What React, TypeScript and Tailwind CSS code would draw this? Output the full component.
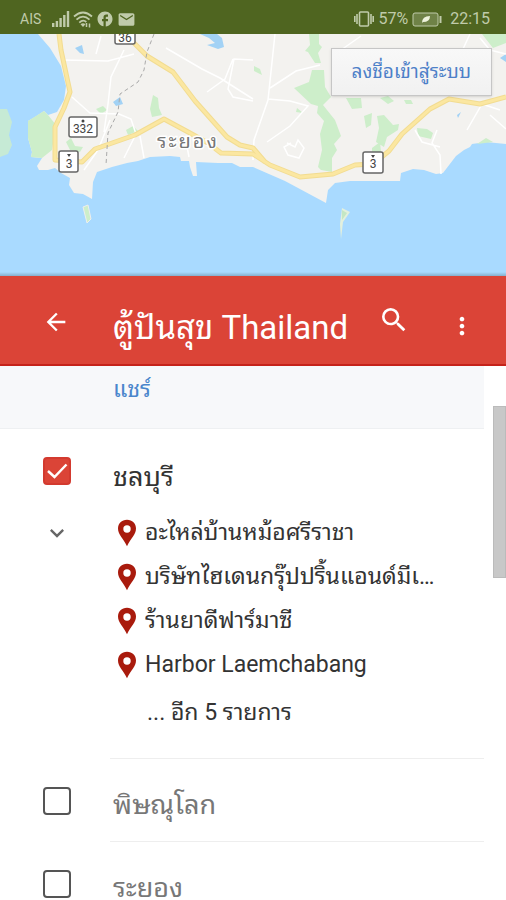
import { useState } from "react";
import { MdArrowBack, MdMoreVert, MdSearch, MdExpandMore, MdEmail, MdFacebook } from "react-icons/md";

const places = ["อะไหล่บ้านหม้อศรีราชา", "บริษัทไฮเดนกรุ๊ปปริ้นแอนด์มีเดีย จำกัด", "ร้านยาดีฟาร์มาซี", "Harbor Laemchabang"];

const StatusBar = () => (
  <div className="flex h-[34px] shrink-0 items-center justify-between bg-[#4f6520] px-4 pl-5 pt-1 text-[#c0cbaa]">
    <div className="flex items-center gap-[3px]">
      <span className="mr-2 text-sm">AIS</span>
      <svg viewBox="0 0 18 16" className="h-4 w-[18px]" fill="currentColor">
        <rect x="0" y="12" width="2.4" height="4" />
        <rect x="3.7" y="10" width="2.4" height="6" />
        <rect x="7.4" y="7" width="2.4" height="9" />
        <rect x="11.1" y="4" width="2.4" height="12" />
        <rect x="14.8" y="0" width="2.4" height="16" />
      </svg>
      <svg viewBox="0 0 20 17" className="h-[17px] w-5" fill="none" stroke="currentColor" strokeWidth="1.8">
        <path d="M1 5.5Q10-2.500 19 5.500M3.500 8.700Q10 2.500 16.500 8.700M6.300 11.600Q10 8 13.300 11" />
        <path d="M7.500 13.200L10 16l2.500-2.800Q10 11.300 7.500 13.200z" fill="currentColor" stroke="none" />
        <path d="M13.500 12v4M16.500 12.500v4" strokeWidth="1.500" />
      </svg>
      <MdFacebook className="size-[18px]" />
      <MdEmail className="size-[19px]" />
    </div>
    <div className="flex items-center gap-1">
      <svg viewBox="0 0 20 16" className="h-4 w-5" fill="none" stroke="currentColor" strokeWidth="1.600">
        <rect x="5.500" y="1" width="9" height="14" rx="1" />
        <path d="M3 3v10M17 3v10M.8 5v6M19.200 5v6" />
      </svg>
      <span className="text-base">57%</span>
      <svg viewBox="0 0 30 15" className="h-[15px] w-[30px]" fill="none" stroke="currentColor">
        <rect x="1" y="1" width="25" height="13" rx="2" fill="#6f8247" />
        <path d="M28.500 4v7" strokeWidth="2" />
        <path d="M10 11q0-7 8-7q0 6-7 6z" fill="#edf2dc" stroke="none" />
      </svg>
      <span className="ml-1 text-base">22:15</span>
    </div>
  </div>
);

const MapView = () => (
  <section className="relative h-[242px] shrink-0 overflow-hidden bg-[#a9daff]">
    <svg viewBox="0 34 506 242" preserveAspectRatio="xMidYMid slice" className="size-full" aria-label="ระยอง">
      <rect y="34" width="506" height="242" fill="#a9daff" />
      <path
        d="M38 34L50 48L61 66L66 86L64 100L57 112L48 115L44 111L35 117L28 121L28 138L32 152L31 157L42 158L37 166L39 170L48 170L55 168L61 173L70 178L69 185L74 193L83 194L92 199L93 182L97 172L112 167L127 163L138 161L150 157L170 156L180 157L181 161L189 161L190 167L193 176L197 176L196 162L218 163L232 163L240 167L253 167L285 181L326 203L328 190L335 183L350 181L400 181L401 173L413 169L424 170L436 174L443 173L456 156L464 150L470 147L472 144L486 142L506 144V34z"
        fill="#f3f2ef"
      />
      <g fill="#cdeeca">
        <path d="M48 115L44 111L28 121L28 138L32 152L31 157L42 158L52 150L56 125z" />
        <path d="M0 109h7l5 13L9 135L12 145L8 154L0 157z" opacity=".8" />
        <path d="M153 95l5 3l1 10l3 7l-10 2l-2-8zM126 130l7-4l5 5l-10 4zM96 109l7-3l4 4l-6 4zM66 142l5-4l4 8l8 1l-3 5l-10-2z" />
        <path d="M309 34h10v10l3 3l-4 6l3 10h-6l-7-11l-3-1l5-6zM294 88l15-6l3-12h12l1 17l6 10l-8 8l12 15l6 16l-7 8l3 6l-5 8v14l-11-2l-3-3l4-17l-2-16l4-13l-7-8l1-7l-7-2z" />
        <path d="M346 98h15l1 10l-10 1zM364 116l8-3l-1 12l-5 3zM377 116l7-1l9 10l6-1l-1 6l-11 7l-3 10l-8-5l3-14zM417 128l10 1l6 4l-2 6l-13-3zM380 98l8-2l6 5l-6 3zM482 34h24v9l-13 5zM372 148l8-6l1 10l-9 2z" />
        <path d="M254 66l6 3l2 6l-8-4zM297 108l6 5l-7-1zM404 100h7l2 4h-7zM477 144l9-6l7 4z" />
      </g>
      <g fill="#a2d2f5">
        <path d="M75 48l7-3l2 9l-4-1zM113 102l7-5l3 7l-7 2zM200 34h17l5 4l2 9l-6 2l-11-4l8-2l-6-5zM500 58l6-4v8zM457 115l4-3l-3 6z" />
      </g>
      <path d="M83 207l5-2l3 14l-4 4z" fill="#cdeeca" stroke="#eee" />
      <path d="M342 208l8 4l-7 10l-2 17l-1-15z" fill="#e3f0dd" />
      <path d="M342 210l5 3l-5 7z" fill="#c4e7c4" />
      <g fill="none" stroke="#fff" strokeWidth="1.500">
        <path d="M63 60l45 1l26-7M101 36l-5 18M124 50l-13 27l-3 27l-4 28M72 97l18 16l29 1l12 5l5 15l-12 24M166 48l36 21l18 9l33 21M233 59l-8 20l-18 13M253 60l-19-1l-6 30l5 8l20 4M110 120l-12 30l-14 20M140 136l4 22M185 136l4 21" />
        <path d="M275 34l-7 66l-14 40l-1 20M268 99l22 2l18 5l-18 20l-23 16M270 88l26-17l24-6M341 50l20-14M470 34l-7 15M480 38l10 12l16 4M437 130l-5 13l8 12l1 19M287 143l8 4l3-7l6 8l-5 10l-11-3l-4-8l7-4M415 130l7 12l18 5M490 115l16 14M500 110l-18-6l-15 26" />
      </g>
      <g fill="none" strokeLinejoin="round">
        <path d="M59 34L61 50L70 92L64 108L55 127L55 160L82 162L95 149L135 135L164 119L190 133L208 143L221 153L253 154L270 165L300 177L333 174L355 165L373 164L389 151L402 134L430 109L449 99L480 104L506 97M132 41L147 56L173 72L195 101L227 137L240 145L253 148L265 162" stroke="#f2dc91" strokeWidth="5" />
        <path d="M59 34L61 50L70 92L64 108L55 127L55 160L82 162L95 149L135 135L164 119L190 133L208 143L221 153L253 154L270 165L300 177L333 174L355 165L373 164L389 151L402 134L430 109L449 99L480 104L506 97M132 41L147 56L173 72L195 101L227 137L240 145L253 148L265 162" stroke="#fbe7a1" strokeWidth="3" />
        <path d="M154 34L147 52L144 70L138 82L120 94L118 112L108 133L106 165" stroke="#aaa" strokeDasharray="4 3" />
      </g>
      <g fill="#fff" stroke="#666" strokeWidth="1.500">
        <rect x="115" y="27" width="20" height="17" rx="2" />
        <rect x="69" y="117" width="28" height="20" rx="2" />
        <rect x="59" y="151" width="19" height="21" rx="2" />
        <rect x="363" y="152" width="20" height="21" rx="2" />
      </g>
      <g fill="#444" className="text-xs" textAnchor="middle">
        <text x="125" y="42">36</text>
        <text x="83" y="133">332</text>
        <text x="69" y="168">3</text>
        <text x="373" y="168">3</text>
        <circle cx="83" cy="121" r="1.500" />
        <path d="M67 154h4l-2 3zM371 155h4l-2 3z" />
      </g>
      <text x="188" y="148" textAnchor="middle" className="text-xl tracking-widest" fill="#777" stroke="#fff" strokeWidth="3" paintOrder="stroke">
        ระยอง
      </text>
    </svg>
    <button className="absolute right-[14px] top-[14px] h-12 border border-[#c6c6c6] bg-linear-to-b from-[#f8f8f8] to-[#f1f1f1] px-5 text-[19px] text-[#4d80c8] shadow-sm">
      ลงชื่อเข้าสู่ระบบ
    </button>
    <div className="absolute inset-x-0 bottom-0 h-1 bg-linear-to-b from-transparent to-black/20" />
  </section>
);

const Pin = () => (
  <svg viewBox="0 0 20 28" className="h-7 w-5 shrink-0">
    <path d="M10 .8C4.700.8 1 4.600 1 9.600C1 16 6.300 19.500 10 27.300C13.700 19.500 19 16 19 9.600C19 4.600 15.300.8 10 .8z" fill="#a91b0d" />
    <circle cx="10" cy="10" r="3.700" fill="#fff" />
  </svg>
);

type LayerCheckboxProps = {
  id: string;
  checked: boolean;
  onChange: () => void;
};

const LayerCheckbox = ({ id, checked, onChange }: LayerCheckboxProps) => (
  <span className="relative size-7 shrink-0">
    <input
      id={id}
      type="checkbox"
      checked={checked}
      onChange={onChange}
      className="block size-7 appearance-none rounded-sm border-2 border-[#555] bg-white checked:border-[#d33a2f] checked:bg-[#db4437]"
    />
    {checked && (
      <svg viewBox="0 0 28 28" className="pointer-events-none absolute inset-0" fill="none" stroke="#fff" strokeWidth="2.500">
        <path d="M5 14l6.500 6L23.500 7.500" />
      </svg>
    )}
  </span>
);

const App = () => {
  const [visible, setVisible] = useState<Record<string, boolean>>({ chonburi: true });

  const toggle = (id: string) => setVisible((prev) => ({ ...prev, [id]: !prev[id] }));

  return (
    <main className="flex h-screen flex-col overflow-hidden bg-white font-[Roboto,'Noto_Sans_Thai_Looped','Droid_Sans_Thai',Loma,Waree,Garuda,'Noto_Serif_Thai',sans-serif]">
      <StatusBar />
      <MapView />
      <header className="flex h-[90px] shrink-0 items-center border-b-2 border-[#c5221a] bg-[#db4437] pl-[42px] pr-[30px] text-white">
        <button aria-label="กลับ" className="mr-[43px] pt-1">
          <MdArrowBack className="size-7" />
        </button>
        <h1 className="flex-1 whitespace-nowrap pt-4 text-[33px] leading-10">ตู้ปันสุข Thailand</h1>
        <button aria-label="ค้นหา" className="mr-[38px]">
          <MdSearch className="size-8" />
        </button>
        <button aria-label="เพิ่มเติม" className="pt-3">
          <MdMoreVert className="size-7" />
        </button>
      </header>
      <div className="flex min-h-0 flex-1">
        <div className="min-w-0 flex-1 overflow-hidden">
          <div className="h-[63px] border-b border-[#eef0f2] bg-[#f7f8fa] pl-[113px] pt-2">
            <a href="#share" className="text-[23px] leading-8 text-[#4a86cc]">
              แชร์
            </a>
          </div>
          <section className="pl-[43px] pt-7">
            <div className="flex gap-[42px]">
              <LayerCheckbox id="chonburi" checked={!!visible.chonburi} onChange={() => toggle("chonburi")} />
              <label htmlFor="chonburi" className="pt-1 text-[27px] leading-8 text-[#333]">
                ชลบุรี
              </label>
            </div>
            <div className="flex pt-[18px]">
              <button aria-label="ย่อรายการ" className="mr-[46px] flex h-11 w-7 items-center justify-center text-[#666]">
                <MdExpandMore className="size-7" />
              </button>
              <div className="min-w-0 flex-1 pr-[46px] text-[23px] text-[#333]">
                <ul>
                  {places.map((place) => (
                    <li key={place} className="flex h-11 items-center gap-2">
                      <Pin />
                      <span className="truncate leading-10">{place}</span>
                    </li>
                  ))}
                </ul>
                <a href="#more" className="block pl-[30px] pt-[6px] leading-10">
                  ... อีก 5 รายการ
                </a>
              </div>
            </div>
          </section>
          <section className="pl-[43px] pt-[25px]">
            <div className="ml-[67px] border-t border-[#eee]" />
            <div className="flex gap-[42px] pb-[22px] pt-7">
              <LayerCheckbox id="phitsanulok" checked={!!visible.phitsanulok} onChange={() => toggle("phitsanulok")} />
              <label htmlFor="phitsanulok" className="pt-1 text-[27px] leading-7 text-[#777]">
                พิษณุโลก
              </label>
            </div>
            <div className="ml-[67px] border-t border-[#eee]" />
            <div className="flex gap-[42px] pt-7">
              <LayerCheckbox id="rayong" checked={!!visible.rayong} onChange={() => toggle("rayong")} />
              <label htmlFor="rayong" className="pt-1 text-[27px] leading-7 text-[#777]">
                ระยอง
              </label>
            </div>
          </section>
        </div>
        <div className="flex w-[22px] justify-end pt-10">
          <div className="h-[172px] w-[13px] border border-[#bbb] bg-[#c8c8c8]" />
        </div>
      </div>
    </main>
  );
};

export default App;
